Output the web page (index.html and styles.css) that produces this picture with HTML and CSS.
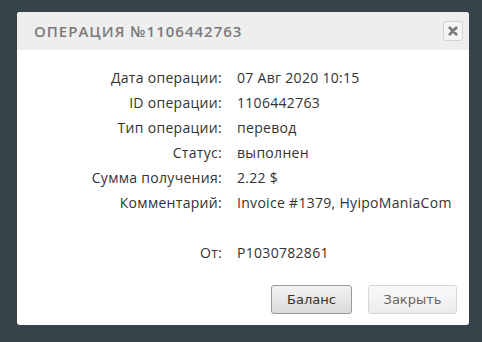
FILE: index.html
```html
<!DOCTYPE html>
<html lang="ru">
<head>
  <meta charset="UTF-8" />
  <title>Операция</title>
  <link rel="stylesheet" href="styles.css">
</head>
<body>

  <div class="dialog">
    <div class="dialog-header">
      <span class="dialog-title">Операция №1106442763</span>
      <span class="dialog-close">
        <svg width="10" height="10" viewBox="0 0 10 10">
          <path d="M1.8 1.8 L8.2 8.2 M8.2 1.8 L1.8 8.2" stroke="#7a7a7a" stroke-width="2.8" stroke-linecap="round"/>
        </svg>
      </span>
    </div>

    <div class="dialog-body">
      <div class="info">
        <div class="label">Дата операции:</div><div class="value">07 Авг 2020 10:15</div>
        <div class="label">ID операции:</div><div class="value">1106442763</div>
        <div class="label">Тип операции:</div><div class="value">перевод</div>
        <div class="label">Статус:</div><div class="value">выполнен</div>
        <div class="label">Сумма получения:</div><div class="value">2.22 $</div>
        <div class="label">Комментарий:</div><div class="value">Invoice #1379, HyipoManiaCom</div>
        <div class="label"></div><div class="value"></div>
        <div class="label">От:</div><div class="value">P1030782861</div>
      </div>
    </div>

    <div class="dialog-buttons">
      <button class="btn btn-main">Баланс</button>
      <button class="btn btn-light">Закрыть</button>
    </div>
  </div>

</body>
</html>
```

FILE: styles.css
```css
* {
  box-sizing: border-box;
  margin: 0;
  padding: 0;
}

body {
  background: #36434b;
  padding: 12px 13px 0 17px;
  width: 482px;
  height: 342px;
  overflow: hidden;
}

/* Dialog box */
.dialog {
  width: 452px;
  height: 313px;
  background: #fff;
  border-radius: 3px;
  overflow: hidden;
  display: flex;
  flex-direction: column;
}

.dialog-header {
  height: 38px;
  background: #eeeeee;
  display: flex;
  align-items: center;
  justify-content: space-between;
  padding: 0 6px 0 17px;
}

.dialog-title {
  font-family: 'Open Sans', sans-serif;
  font-weight: 600;
  font-size: 15px;
  letter-spacing: 1px;
  text-transform: uppercase;
  color: #7a7a7a;
}

.dialog-close {
  width: 20px;
  height: 20px;
  border: 1px solid #d2d2d2;
  border-radius: 3px;
  background: #f4f4f4;
  display: flex;
  align-items: center;
  justify-content: center;
}

/* Info rows */
.dialog-body {
  flex: 1;
  padding-top: 15px;
}

.info {
  display: grid;
  grid-template-columns: 205px 1fr;
  grid-auto-rows: 25px;
  column-gap: 15px;
  font-family: 'Open Sans', sans-serif;
  font-size: 14px;
  letter-spacing: 0.3px;
  color: #333;
  align-items: center;
}

.info .label {
  text-align: right;
}

/* Buttons */
.dialog-buttons {
  display: flex;
  justify-content: flex-end;
  gap: 16px;
  padding: 0 12px 11px 0;
}

.btn {
  height: 29px;
  border-radius: 3px;
  font-family: 'DejaVu Sans', sans-serif;
  font-size: 13px;
}

.btn-main {
  width: 81px;
  border: 1px solid #9a9a9a;
  background: linear-gradient(#f2f2f2, #dadada);
  color: #333;
}

.btn-light {
  width: 89px;
  border: 1px solid #d6d6d6;
  background: linear-gradient(#f8f8f8, #ececec);
  color: #666;
}
```
